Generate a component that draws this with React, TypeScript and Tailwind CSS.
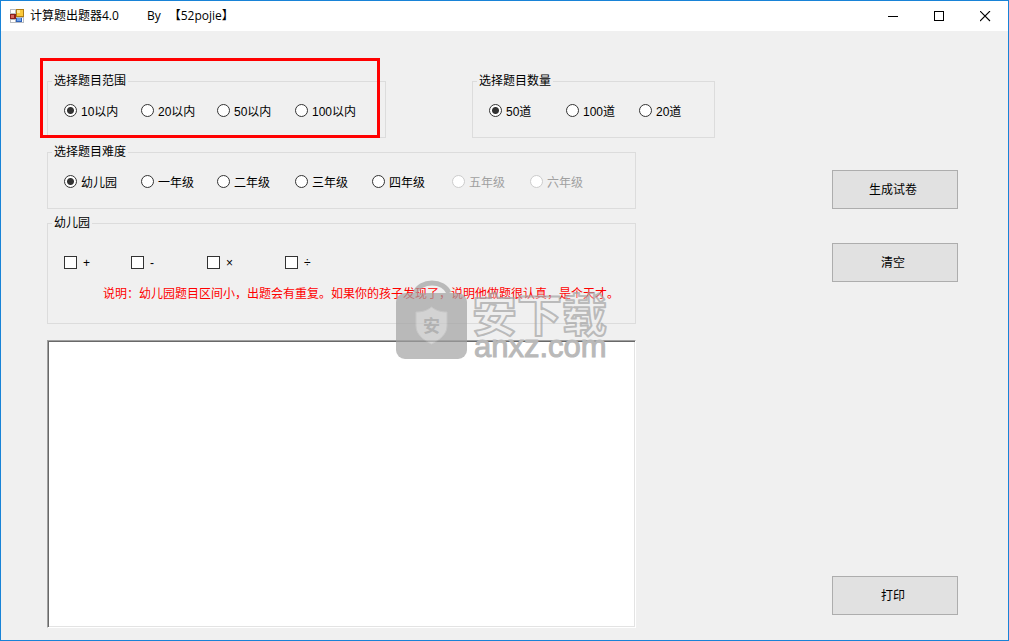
import { useState, type ReactNode } from "react";

type Option = { label: string; disabled?: boolean };

const RANGES: Option[] = [
  { label: "10以内" },
  { label: "20以内" },
  { label: "50以内" },
  { label: "100以内" },
];

const COUNTS: Option[] = [{ label: "50道" }, { label: "100道" }, { label: "20道" }];

const GRADES: Option[] = [
  { label: "幼儿园" },
  { label: "一年级" },
  { label: "二年级" },
  { label: "三年级" },
  { label: "四年级" },
  { label: "五年级", disabled: true },
  { label: "六年级", disabled: true },
];

const OPERATORS = ["+", "-", "×", "÷"];

function AppIcon() {
  return (
    <svg width="14" height="14" viewBox="0 0 14 14" shapeRendering="crispEdges" aria-hidden="true">
      <rect width="14" height="14" fill="#b9bcc0" />
      <rect x="1" y="1" width="4" height="3" fill="#fff" />
      <rect x="1" y="11" width="4" height="2" fill="#fff" />
      <rect y="5" width="6" height="5" fill="#8c1f1c" />
      <rect x="1" y="6" width="3" height="3" fill="#d9665c" />
      <rect x="6" width="8" height="8" fill="#b07d14" />
      <rect x="7" y="1" width="6" height="6" fill="#fbc93a" />
      <rect x="7" y="1" width="3" height="3" fill="#fde79a" />
      <rect x="6" y="9" width="6" height="4" fill="#2f62b8" />
      <rect x="7" y="9" width="4" height="3" fill="#6fa2ea" />
      <rect x="12" y="9" width="1" height="4" fill="#fff" />
    </svg>
  );
}

function TitleBar() {
  const control = "flex h-[30px] w-[46px] items-center justify-center hover:bg-[#e5e5e5]";

  return (
    <header className="flex h-[30px] items-center bg-white pl-[9px]">
      <AppIcon />
      <h1 className="ml-1.5 flex flex-1 whitespace-nowrap font-['Open_Sans','Noto_Sans_CJK_SC',sans-serif] text-[12px] leading-4">
        <span>计算题出题器4.0</span>
        <span className="ml-7">By</span>
        <span className="ml-2">【52pojie】</span>
      </h1>
      <button type="button" aria-label="最小化" className={control}>
        <svg width="10" height="11" shapeRendering="crispEdges">
          <rect y="5" width="10" height="1" />
        </svg>
      </button>
      <button type="button" aria-label="最大化" className={control}>
        <svg width="11" height="11" shapeRendering="crispEdges">
          <rect x="0.5" y="0.5" width="9" height="9" fill="none" stroke="#000" />
        </svg>
      </button>
      <button type="button" aria-label="关闭" className={control}>
        <svg width="11" height="11">
          <path d="M0 0 10 10M10 0 0 10" stroke="#000" strokeWidth="1.1" />
        </svg>
      </button>
    </header>
  );
}

function Group({ title, className = "", children }: { title: string; className?: string; children: ReactNode }) {
  return (
    <fieldset className={`min-w-0 border border-[#dcdcdc] pl-4 ${className}`}>
      <legend className="-ml-3 px-0.5 leading-4">{title}</legend>
      {children}
    </fieldset>
  );
}

function RadioRow({ name, options, className }: { name: string; options: Option[]; className: string }) {
  const [selected, setSelected] = useState(options[0].label);

  return (
    <div className={`grid pt-3.5 ${className}`}>
      {options.map(({ label, disabled }) => (
        <label
          key={label}
          className={`flex items-start gap-1 whitespace-nowrap leading-[18px] ${disabled ? "text-[#a0a0a0]" : ""}`}
        >
          <input
            type="radio"
            name={name}
            disabled={disabled}
            checked={selected === label}
            onChange={() => setSelected(label)}
            className="mt-px size-[13px] shrink-0 appearance-none rounded-full border border-[#333] bg-white checked:bg-[radial-gradient(circle,#333_3px,#fff_4px)] disabled:border-[#ccc]"
          />
          {label}
        </label>
      ))}
    </div>
  );
}

function PushButton({ children, className = "", onClick }: { children: ReactNode; className?: string; onClick?: () => void }) {
  return (
    <button
      type="button"
      onClick={onClick}
      className={`h-[39px] shrink-0 border border-[#adadad] bg-[#e1e1e1] pr-1 leading-4 hover:border-[#0078d7] hover:bg-[#e5f1fb] ${className}`}
    >
      {children}
    </button>
  );
}

function Watermark() {
  return (
    <svg
      width="216"
      height="84"
      viewBox="0 0 216 84"
      className="pointer-events-none absolute right-6 top-[135px] font-['Liberation_Sans','Noto_Sans_CJK_SC',sans-serif]"
    >
      <g opacity="0.7">
        <path d="M19 14a18 15 0 0 1 34 0" fill="none" stroke="#a3a3a3" strokeWidth="5" />
        <rect y="14" width="71" height="66" rx="9" fill="#a3a3a3" />
        <path
          d="M35.500 28c5 4 10 5 15.500 5v14c0 8-7 14-15.500 18C27 61 20 55 20 47V33c5.500 0 10.500-1 15.500-5z"
          fill="#c8c8c8"
          stroke="#b4b4b4"
        />
        <text x="35.500" y="53" textAnchor="middle" fontSize="17" fontWeight="700" fill="#999">
          安
        </text>
      </g>
      <text
        x="76"
        y="53"
        fontSize="45"
        fontWeight="700"
        fill="#ededed"
        fillOpacity="0.3"
        stroke="#a3a3a3"
        strokeOpacity="0.7"
        strokeWidth="2"
        strokeLinejoin="round"
      >
        安下载
      </text>
      <text x="78" y="78" fontSize="31" fill="#b9b9b9" stroke="#b9b9b9">
        anxz.com
      </text>
    </svg>
  );
}

export default function App() {
  const [paper, setPaper] = useState("");

  return (
    <div className="flex min-h-screen flex-col border border-[#1883d7] bg-[#f0f0f0] font-['Liberation_Sans','Noto_Sans_CJK_SC',sans-serif] text-[12px] text-black">
      <TitleBar />

      <main className="flex flex-1 flex-col pb-3 pl-[46px] pr-[50px] pt-[42px]">
        <div className="flex gap-[86px]">
          <div className="relative w-[339px]">
            <Group title="选择题目范围" className="h-[65px]">
              <RadioRow name="range" options={RANGES} className="grid-cols-[77px_76px_78px_auto]" />
            </Group>
            {/* highlight around the range options */}
            <div className="pointer-events-none absolute -left-[7px] -top-[15px] bottom-0 right-1.5 border-3 border-[#f00]" />
          </div>
          <Group title="选择题目数量" className="h-[65px] w-[243px]">
            <RadioRow name="count" options={COUNTS} className="grid-cols-[77px_73px_auto]" />
          </Group>
        </div>

        <div className="mt-1.5 flex flex-1 gap-[196px]">
          <div className="relative flex min-w-0 flex-1 flex-col">
            <Group title="选择题目难度" className="h-[65px]">
              <RadioRow
                name="grade"
                options={GRADES}
                className="grid-cols-[77px_76px_78px_77px_80px_78px_auto]"
              />
            </Group>

            <Group title="幼儿园" className="mt-1.5 h-[109px]">
              <div className="grid grid-cols-[67px_76px_78px_auto] pt-6">
                {OPERATORS.map((op) => (
                  <label key={op} className="flex h-4 items-start gap-1.5 leading-4">
                    <input
                      type="checkbox"
                      className="mt-px size-[13px] shrink-0 appearance-none border border-[#333] bg-white checked:bg-[#333] checked:shadow-[inset_0_0_0_2px_#fff]"
                    />
                    {op}
                  </label>
                ))}
              </div>
              <p className="mt-[15px] whitespace-nowrap pl-[39px] leading-4 text-[#f00]">
                说明：幼儿园题目区间小，出题会有重复。如果你的孩子发现了，说明他做题很认真，是个天才。
              </p>
            </Group>

            <textarea
              aria-label="试卷"
              value={paper}
              onChange={(e) => setPaper(e.target.value)}
              className="mt-4 flex-1 resize-none border border-b-white border-l-[#a0a0a0] border-r-white border-t-[#a0a0a0] bg-white p-1 shadow-[inset_1px_1px_#696969,inset_-1px_-1px_#e3e3e3] outline-none"
            />
            <Watermark />
          </div>

          <div className="flex w-[126px] shrink-0 flex-col pb-[13px] pt-[26px]">
            <PushButton>生成试卷</PushButton>
            <PushButton className="mt-[34px]" onClick={() => setPaper("")}>
              清空
            </PushButton>
            <PushButton className="mt-auto">打印</PushButton>
          </div>
        </div>
      </main>
    </div>
  );
}
